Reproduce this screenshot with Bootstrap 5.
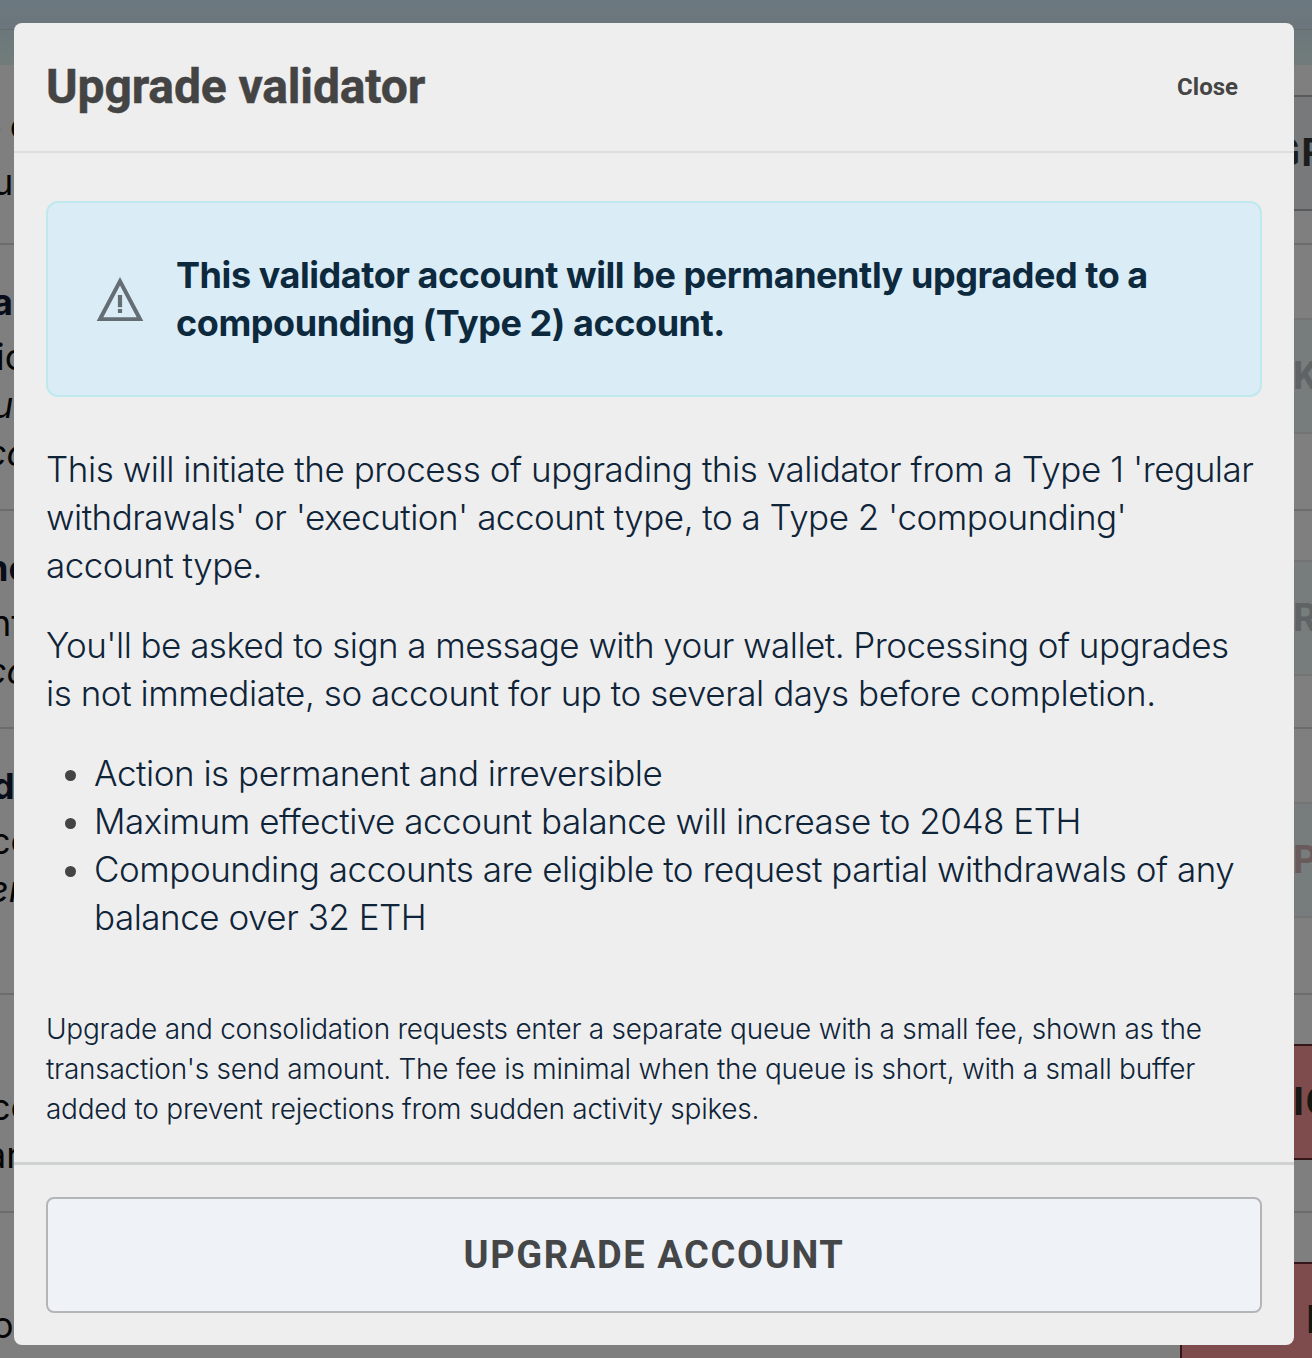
<!DOCTYPE html>
<html lang="en">
<head>
<meta charset="utf-8">
<meta name="viewport" content="width=device-width, initial-scale=1">
<title>Upgrade validator</title>
<link rel="stylesheet" href="https://cdn.jsdelivr.net/npm/bootstrap@5.3.0/dist/css/bootstrap.min.css">
<style>
html, body { height: 1358px; overflow: hidden; }
body { background: #7f7f7f; font-family: Inter, sans-serif; color: #0f2438; font-size: 36px; line-height: 48px; }
/* page behind the dialog */
.page { height: 1358px; overflow: hidden; }
.topbar { height: 30px; background: linear-gradient(#6c7880, #6b757b); border-bottom: 1px solid #626d70; }
.subbar { height: 35px; background: linear-gradient(#6b777b, #717c7a); }
.setting { height: 218px; border-bottom: 2px solid #6c6c6c; color: #050505; }
.setting.first { height: 180px; }
.setting.tall { height: 266px; }
.setting .words { width: 14px; overflow: hidden; padding-top: 33px; white-space: nowrap; }
.setting.first .words { padding-top: 37px; }
.setting .heading { height: 55px; font-weight: 700; color: #080d19; }
.setting.first .heading { height: 56px; font-weight: 400; color: #050505; }
.words div { margin-left: -8px; }
.words .s4 { margin-left: -4px; }
.words .s10 { margin-left: -10px; }
.words .s12 { margin-left: -12px; }
.words .s14 { margin-left: -14px; }
.words .s22 { margin-left: -20px; word-spacing: -2px; }
.act { width: 132px; height: 116px; margin-bottom: 2px; border: 2px solid #585a5c; border-right: 0; background: #77797b; font: 700 38px/112px Roboto, sans-serif; letter-spacing: 1.6px; white-space: nowrap; overflow: hidden; color: #1b1c1c; }
.act.off { background: #777c7c; border-color: #737474; color: #606363; }
.act.off.warm { color: #695b5b; }
.act.danger-act { background: #7f4c4e; border-color: #35171a; color: #171713; }
.act span { display: block; margin-left: 111px; }
.act .t92 { margin-left: 92px; }
.act .t124 { margin-left: 124px; }
/* dialog */
.sheet { position: absolute; left: 14px; top: 23px; width: 1280px; height: 1322px; background: #eee; border-radius: 8px; }
.sheet-head { height: 130px; border-bottom: 2px solid #dcdddd; padding: 0 56px 0 32px; font-family: Roboto, sans-serif; font-weight: 700; color: #444; }
.sheet-head h1 { font-size: 48px; font-weight: 700; letter-spacing: -.13px; line-height: 56px; -webkit-text-stroke: .5px #444; }
.close-link { font-size: 24px; line-height: 32px; letter-spacing: 0; font-weight: 700; color: #444; }
.sheet-body { height: 1012px; padding: 48px 32px 0; border-bottom: 3px solid #d0d1d1; font-weight: 300; }
.notice { height: 196px; border: 2px solid #bfe9ed; border-radius: 12px; background: #daecf6; padding-left: 48px; font-weight: 700; color: #0d293d; margin-bottom: 48px; letter-spacing: -.44px; }
.notice svg { width: 48px; height: 46px; margin-right: 32px; }
.copy { font-size: 35px; letter-spacing: -.48px; white-space: nowrap; }
.copy p { margin-bottom: 32px; }
.copy p:first-child::first-line { letter-spacing: -.45px; }
.copy p:first-child { letter-spacing: -.51px; }
.copy p:nth-child(2) { letter-spacing: -.45px; }
.copy p:nth-child(2)::first-line { letter-spacing: -.54px; }
.copy ul { padding-left: 48px; margin-bottom: 68px; }
.copy li::marker { color: #444; }
.fine { font-size: 28px; line-height: 40px; white-space: nowrap; letter-spacing: -.26px; }
.sheet-foot { padding: 32px 32px; }
.go { height: 116px; background: #eff3f8; border: 2px solid #b3b5b8; border-radius: 8px; font: 700 38px/112px Roboto, sans-serif; letter-spacing: 1.6px; color: #444647; padding: 0; }
</style>
<script src="https://cdn.jsdelivr.net/npm/bootstrap@5.3.0/dist/js/bootstrap.bundle.min.js"></script>
</head>
<body>
<div class="page">
  <div class="topbar"></div>
  <div class="subbar"></div>
  <div class="setting first d-flex justify-content-between align-items-start">
    <div class="words"><div class="heading s22">o c</div><div>u</div></div>
    <div class="act align-self-center"><span class="t92">GR</span></div>
  </div>
  <div class="setting tall d-flex justify-content-between align-items-start">
    <div class="words"><div class="heading">a</div><div class="s4">ic</div><div><i>u</i></div><div class="s14"><i>co</i></div></div>
    <div class="act off align-self-center"><span>K</span></div>
  </div>
  <div class="setting d-flex justify-content-between align-items-start">
    <div class="words"><div class="heading s14">nc</div><div class="s10">nt</div><div class="s14"><i>co</i></div></div>
    <div class="act off align-self-center"><span>R</span></div>
  </div>
  <div class="setting tall d-flex justify-content-between align-items-start">
    <div class="words"><div class="heading">d</div><div class="s10">cc</div><div class="s12"><i>er</i></div></div>
    <div class="act off warm align-self-center"><span>P</span></div>
  </div>
  <div class="setting d-flex justify-content-between align-items-start">
    <div class="words"><div class="heading"></div><div class="s10">cc</div><div class="s14">ar</div></div>
    <div class="act danger-act align-self-center"><span>IO</span></div>
  </div>
  <div class="setting d-flex justify-content-between align-items-start">
    <div class="words"><div class="heading"></div><div>o</div></div>
    <div class="act danger-act align-self-center"><span class="t124">I</span></div>
  </div>
</div>

<div class="sheet" role="dialog" aria-label="Upgrade validator">
  <div class="sheet-head d-flex justify-content-between align-items-center">
    <h1 class="m-0">Upgrade validator</h1>
    <button type="button" class="close-link btn p-0 border-0">Close</button>
  </div>
  <div class="sheet-body">
    <div class="notice d-flex align-items-center">
      <svg viewBox="0 0 48 46" fill="#646d73" aria-hidden="true"><path fill-rule="evenodd" d="M24 1 47.3 45H.7ZM24 9.5 7.3 41.3H40.7Z"/><path d="M21.9 19h4.2v12.3h-4.2zM21.9 33h4.2v4.1h-4.2z"/></svg>
      <div>This validator account will be permanently upgraded to a<br>compounding (Type 2) account.</div>
    </div>
    <div class="copy">
      <p>This will initiate the process of upgrading this validator from a Type 1 'regular<br>withdrawals' or 'execution' account type, to a Type 2 'compounding'<br>account type.</p>
      <p>You'll be asked to sign a message with your wallet. Processing of upgrades<br>is not immediate, so account for up to several days before completion.</p>
      <ul>
        <li>Action is permanent and irreversible</li>
        <li>Maximum effective account balance will increase to 2048 ETH</li>
        <li>Compounding accounts are eligible to request partial withdrawals of any<br>balance over 32 ETH</li>
      </ul>
    </div>
    <div class="fine">Upgrade and consolidation requests enter a separate queue with a small fee, shown as the<br>transaction's send amount. The fee is minimal when the queue is short, with a small buffer<br>added to prevent rejections from sudden activity spikes.</div>
  </div>
  <div class="sheet-foot">
    <button type="button" class="go btn w-100">UPGRADE ACCOUNT</button>
  </div>
</div>
</body>
</html>
